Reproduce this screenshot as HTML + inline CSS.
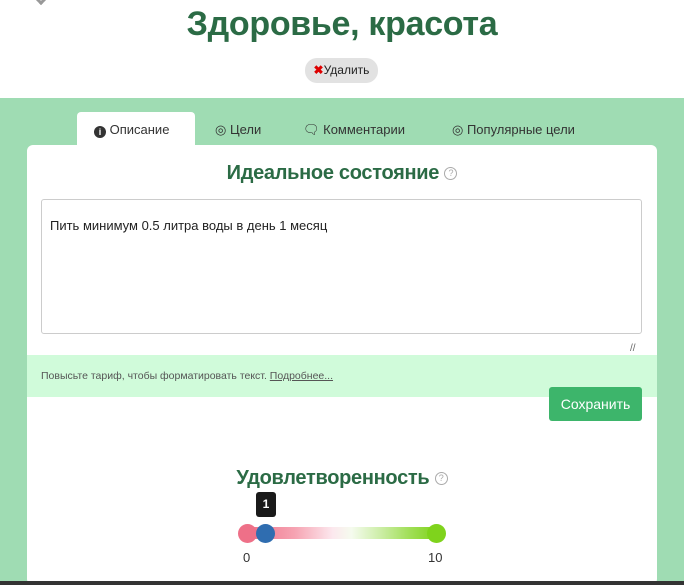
<!DOCTYPE html>
<html><head><meta charset="utf-8"><style>
*{margin:0;padding:0;box-sizing:border-box}
body{width:684px;height:585px;overflow:hidden;background:#fff;font-family:"Liberation Sans",sans-serif;position:relative}
.a{position:absolute}
h1{position:absolute;top:5px;left:0;width:684px;text-align:center;font-size:34px;font-weight:bold;color:#2b6b45;letter-spacing:-0.3px}
.del{left:305px;top:58px;width:73px;height:25px;border-radius:12px;background:#e2e2e2;font-size:12px;color:#222;line-height:25px;text-align:center}
.green{left:0;top:98px;width:684px;height:487px;background:#9fdcb3}
.card{left:27px;top:145px;width:630px;height:440px;background:#fff;border-radius:6px}
.tab{top:112px;height:34px;font-size:13px;color:#333;line-height:36px}
.tabact{left:77px;width:118px;background:#fff;border-radius:4px 4px 0 0}
.h2{font-size:20px;font-weight:bold;color:#2b6b45;text-align:center;width:684px;left:0;letter-spacing:-0.3px}
.q{display:inline-block;width:13px;height:13px;border:1px solid #aaa;border-radius:50%;font-size:9px;font-weight:normal;color:#aaa;line-height:11px;text-align:center;vertical-align:middle}
.ta{left:41px;top:199px;width:601px;height:135px;border:1px solid #ccc;border-radius:3px;font-size:13px;color:#222;padding:18px 8px}
.strip{left:27px;top:355px;width:630px;height:42px;background:#d0fbda;font-size:10.5px;color:#555;padding:15px 14px}
.btn{left:549px;top:387px;width:93px;height:34px;background:#3db56b;border-radius:3px;color:#fff;font-size:14px;text-align:center;line-height:34px}
.dot{width:19px;height:19px;border-radius:50%;top:524px}
</style></head><body>
<div class="a" style="left:36px;top:-7px;width:10px;height:10px;border-left:3px solid #999;border-bottom:3px solid #999;transform:rotate(-45deg)"></div>
<h1>Здоровье, красота</h1>
<div class="a del"><span style="color:#d00;font-weight:bold">✖</span>Удалить</div>
<div class="a green"></div>
<div class="a card"></div>
<div class="a tab tabact"></div>
<div class="a tab" style="left:94px"><span style="display:inline-block;width:12px;height:12px;border-radius:50%;background:#333;color:#fff;font-size:9px;text-align:center;line-height:12px;font-weight:bold;vertical-align:-1px">i</span> Описание</div>
<div class="a tab" style="left:215px">◎ Цели</div>
<div class="a tab" style="left:303px">🗨 Комментарии</div>
<div class="a tab" style="left:452px">◎ Популярные цели</div>
<div class="a h2" style="top:162px">Идеальное состояние <span class="q">?</span></div>
<div class="a ta">Пить минимум 0.5 литра воды в день 1 месяц</div>
<div class="a" style="left:630px;top:343px;font-size:10px;color:#666">//</div>
<div class="a strip">Повысьте тариф, чтобы форматировать текст. <u>Подробнее...</u></div>
<div class="a btn">Сохранить</div>
<div class="a h2" style="top:467px">Удовлетворенность <span class="q">?</span></div>
<div class="a" style="left:256px;top:492px;width:20px;height:25px;background:#1a1a1a;border-radius:3px;color:#fff;font-size:12px;font-weight:bold;text-align:center;line-height:25px">1</div>
<div class="a" style="left:247px;top:527px;width:190px;height:12px;background:linear-gradient(90deg,#ee7088 0%,#f6a3b2 25%,#fce8ee 45%,#f5fbee 55%,#cdeea8 70%,#a2df5a 85%,#7fd31c 100%)"></div>
<div class="a dot" style="left:238px;background:#ee7088"></div>
<div class="a dot" style="left:256px;background:#2f6db0"></div>
<div class="a dot" style="left:427px;background:#7fd31c"></div>
<div class="a" style="left:243px;top:550px;font-size:13px;color:#333">0</div>
<div class="a" style="left:428px;top:550px;font-size:13px;color:#333">10</div>
<div class="a" style="left:0;top:581px;width:684px;height:4px;background:#333"></div>
</body></html>
